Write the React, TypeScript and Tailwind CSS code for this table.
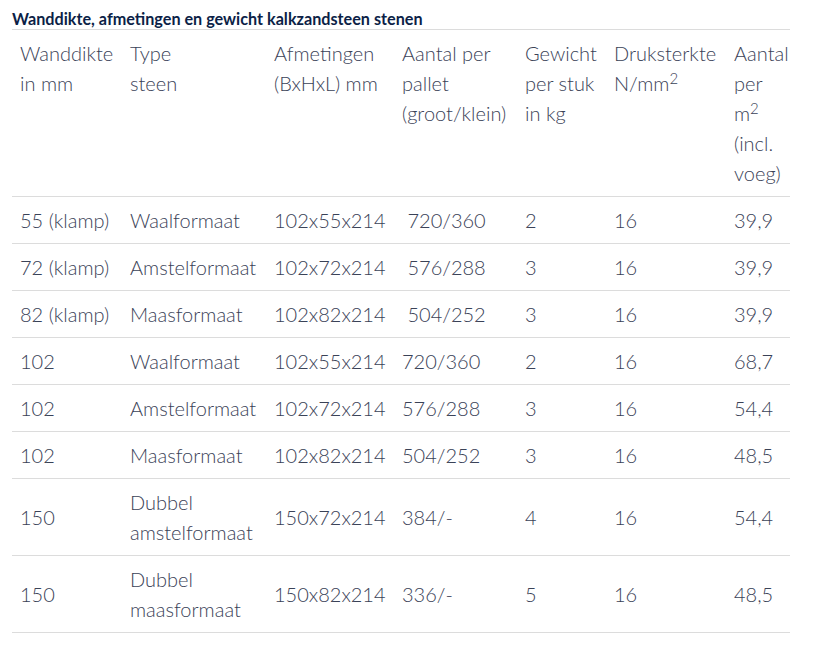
import React from "react";

const rows: [string, string, string, string, string, string, string][] = [
  ["55 (klamp)", "Waalformaat", "102x55x214", "\u00a0720/360", "2", "16", "39,9"],
  ["72 (klamp)", "Amstelformaat", "102x72x214", "\u00a0576/288", "3", "16", "39,9"],
  ["82 (klamp)", "Maasformaat", "102x82x214", "\u00a0504/252", "3", "16", "39,9"],
  ["102", "Waalformaat", "102x55x214", "720/360", "2", "16", "68,7"],
  ["102", "Amstelformaat", "102x72x214", "576/288", "3", "16", "54,4"],
  ["102", "Maasformaat", "102x82x214", "504/252", "3", "16", "48,5"],
  ["150", "Dubbel amstelformaat", "150x72x214", "384/-", "4", "16", "54,4"],
  ["150", "Dubbel maasformaat", "150x82x214", "336/-", "5", "16", "48,5"],
];

export default function App() {
  return (
    <div
      className="bg-white w-[838px] h-[649px] pl-[12px]"
      style={{ fontFamily: "Lato, 'Open Sans', sans-serif" }}
    >
      <table className="table-fixed border-collapse w-[778px] text-[20px] font-light leading-[30px] text-[#3a4257]">
        <caption className="text-left font-bold text-[16.2px] leading-[20px] pt-[9px] text-[#0c1f47]">
          Wanddikte, afmetingen en gewicht kalkzandsteen stenen
        </caption>
        <colgroup>
          <col className="w-[110px]" />
          <col className="w-[144px]" />
          <col className="w-[128px]" />
          <col className="w-[123px]" />
          <col className="w-[89px]" />
          <col className="w-[120px]" />
          <col className="w-[64px]" />
        </colgroup>
        <thead>
          <tr className="border-t border-b border-[#dcdcdc]">
            <th className="font-light text-left align-top px-2 py-2 whitespace-nowrap">
              Wanddikte<br />in mm
            </th>
            <th className="font-light text-left align-top px-2 py-2 whitespace-nowrap">
              Type<br />steen
            </th>
            <th className="font-light text-left align-top px-2 py-2 whitespace-nowrap">
              Afmetingen<br />(BxHxL) mm
            </th>
            <th className="font-light text-left align-top px-2 py-2 whitespace-nowrap">
              Aantal per<br />pallet<br />(groot/klein)
            </th>
            <th className="font-light text-left align-top px-2 py-2 whitespace-nowrap">
              Gewicht<br />per stuk<br />in kg
            </th>
            <th className="font-light text-left align-top px-2 py-2 whitespace-nowrap">
              Druksterkte<br />N/mm<sup>2</sup>
            </th>
            <th className="font-light text-left align-top px-2 py-2 whitespace-nowrap">
              Aantal<br />per<br />m<sup>2</sup><br />(incl.<br />voeg)
            </th>
          </tr>
        </thead>
        <tbody>
          {rows.map((r, i) => (
            <tr key={i} className="border-b border-[#dcdcdc]">
              {r.map((c, j) => (
                <td
                  key={j}
                  className="align-middle px-2 py-2 text-left whitespace-nowrap"
                >
                  {j === 1 && c.startsWith("Dubbel ") ? (
                    <>
                      Dubbel
                      <br />
                      {c.slice(7)}
                    </>
                  ) : (
                    c
                  )}
                </td>
              ))}
            </tr>
          ))}
        </tbody>
      </table>
    </div>
  );
}
